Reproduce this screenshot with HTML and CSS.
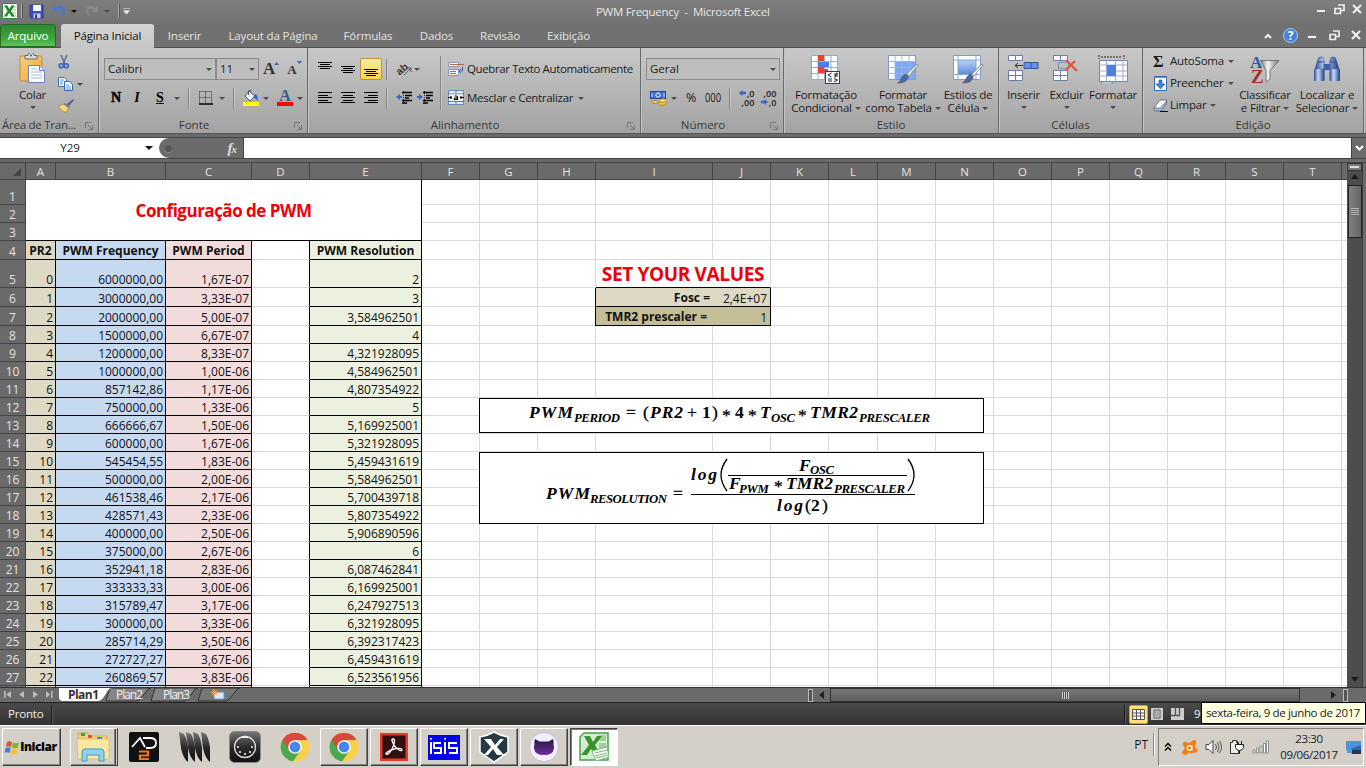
FILE: index.html
```html
<!DOCTYPE html>
<html lang="pt-BR">
<head>
<meta charset="utf-8">
<title>PWM Frequency - Microsoft Excel</title>
<link rel="stylesheet" href="styles.css">
</head>
<body>
<svg class="sprite" width="0" height="0" aria-hidden="true">
  <defs>
    <linearGradient id="gBlue" x1="0" y1="0" x2="0" y2="1"><stop offset="0" stop-color="#b9d0f5"/><stop offset="1" stop-color="#5f8fdc"/></linearGradient>
    <linearGradient id="gBin" x1="0" y1="0" x2="1" y2="0"><stop offset="0" stop-color="#2d4f94"/><stop offset=".4" stop-color="#c4d8fa"/><stop offset="1" stop-color="#1f3c7c"/></linearGradient>
    <linearGradient id="gFun" x1="0" y1="0" x2="1" y2="0"><stop offset="0" stop-color="#777"/><stop offset=".4" stop-color="#f4f4f4"/><stop offset="1" stop-color="#777"/></linearGradient>
    <linearGradient id="gPaste" x1="0" y1="0" x2="1" y2="1"><stop offset="0" stop-color="#f7cf7c"/><stop offset="1" stop-color="#e8a83c"/></linearGradient>
    <linearGradient id="gBlack" x1="0" y1="0" x2="0" y2="1"><stop offset="0" stop-color="#777"/><stop offset=".5" stop-color="#2a2a2a"/><stop offset="1" stop-color="#111"/></linearGradient>
    <linearGradient id="gPurple" x1="0" y1="0" x2="0" y2="1"><stop offset="0" stop-color="#2b1640"/><stop offset="1" stop-color="#6c2fa0"/></linearGradient>
    <symbol id="xl" viewBox="0 0 16 16"><rect x=".5" y=".5" width="15" height="15" rx="1" fill="#f4faf2" stroke="#2d8a3b"/><path d="M9 4h5M9 7h5M9 10h5M9 13h5" stroke="#9ccb98"/><path d="M2 2.500h3.300l2 3.600L9.600 2.500h3L8.900 8l4 5.500H9.600L7.200 9.800 5 13.500H1.800L5.600 8z" fill="#1f8a2c"/></symbol>
    <symbol id="save" viewBox="0 0 15 15"><path d="M1 1h13v13H2.500L1 12.500z" fill="#3d52b4" stroke="#2a3a90"/><path d="M4 1h8v6H4z" fill="#f2f5ff"/><path d="M4.500 9.500h7V14h-7z" fill="#c9cde8"/><path d="M6 10.500h2V14H6z" fill="#2a3a90"/></symbol>
    <symbol id="undo" viewBox="0 0 14 14"><path d="M1 1.500v6.500h6.500L5.300 5.800C8 3.300 11.500 5 10.500 8.500 10 10.500 9 11.500 7.500 13 12 11 13.500 8 13 5.500 12 1.500 7 .5 3.500 4z" fill="currentColor"/></symbol>
    <symbol id="scissors" viewBox="0 0 12 14"><path d="M3 0l4 9M9 0L5 9" stroke="#5b6b85" stroke-width="1.500"/><circle cx="3.200" cy="10.700" r="2" fill="none" stroke="#3463bb" stroke-width="1.600"/><circle cx="8.300" cy="10.700" r="2" fill="none" stroke="#3463bb" stroke-width="1.600"/></symbol>
    <symbol id="copy" viewBox="0 0 15 14"><path d="M.5.500h6l2 2v7h-8z" fill="#fff" stroke="#4c6ca8"/><path d="M6.500 4.500h5l3 3v6h-8z" fill="#fff" stroke="#3565b8"/><path d="M2 3h4M2 5h3M2 7h3M8 8h3M8 10h5M8 12h5" stroke="#4d8ae0"/></symbol>
    <symbol id="brush" viewBox="0 0 16 14"><path d="M15 0l1 1-5 6-2-2z" fill="#555f86"/><path d="M6 5l5 4-3 4.500C5 13 2 10.500.5 7z" fill="#f4d778" stroke="#a98024" stroke-width=".7"/><path d="M7 4l5 4-1.300 1.300-5-4z" fill="#7079a0"/></symbol>
    <symbol id="paste" viewBox="0 0 27 31"><rect x="1" y="3" width="22" height="25" rx="1.500" fill="url(#gPaste)" stroke="#c08b32"/><path d="M6 2.500h3a3 3 0 0 1 6 0h3V6H6z" fill="#ddd" stroke="#666"/><circle cx="12" cy="2.500" r="1" fill="#555"/><path d="M9.500 12.500h11l5 5v12h-16z" fill="#fff" stroke="#6982b2"/><path d="M20.500 12.500v5h5" fill="#dbe6fa" stroke="#6982b2"/><path d="M12 16h6M12 19h11M12 22h11M12 25h11" stroke="#9eb5d9"/></symbol>
    <symbol id="bord" viewBox="0 0 14 14"><path d="M.5.500h12v12M.5.500v12M6.500.500v12M.5 6.500h12" stroke="#333" stroke-dasharray="1 1" fill="none"/><path d="M0 13h14" stroke="#000" stroke-width="1.500"/></symbol>
    <symbol id="bucket" viewBox="0 0 16 16"><path d="M6 1l6 5-5 5-5-5z" fill="#eef3fc" stroke="#42587f"/><path d="M5.500 5V1.500a1.500 1.500 0 0 1 3 0" fill="none" stroke="#555"/><path d="M12 4c3 1 3 4 2.500 7C13 9 12 8 10 8z" fill="#3567b5"/><path d="M0 12h16v4H0z" fill="#ff0"/></symbol>
    <symbol id="al" viewBox="0 0 14 12"><path d="M0 .5h14M0 3.500h10M0 5.500h14M0 8.500h10M0 10.500h14" stroke="#000"/></symbol>
    <symbol id="ac" viewBox="0 0 14 12"><path d="M0 .5h14M2 3.500h10M0 5.500h14M2 8.500h10M0 10.500h14" stroke="#000"/></symbol>
    <symbol id="ar" viewBox="0 0 14 12"><path d="M0 .5h14M4 3.500h10M0 5.500h14M4 8.500h10M0 10.500h14" stroke="#000"/></symbol>
    <symbol id="vt" viewBox="0 0 14 7"><path d="M0 .5h14M2 2.500h10M0 4.500h14M2 6.500h10" stroke="#000"/></symbol>
    <symbol id="outd" viewBox="0 0 16 14"><path d="M0 6l4-3v2h2v2H4v2z" fill="#3a66c4"/><path d="M6 1.500h10M9 4.500h7M9 7h4M6 9.500h10M6 12h5" stroke="#000" stroke-width="1.400"/><path d="M7.500 0v14" stroke="#222" stroke-dasharray="1 1"/></symbol>
    <symbol id="ind" viewBox="0 0 16 14"><path d="M6 6L2 3v2H0v2h2v2z" fill="#3a66c4"/><path d="M6 1.500h10M9 4.500h7M9 7h4M6 9.500h10M6 12h5" stroke="#000" stroke-width="1.400"/><path d="M7.500 0v14" stroke="#222" stroke-dasharray="1 1"/></symbol>
    <symbol id="wrap" viewBox="0 0 16 16"><path d="M.5 1.500h10v4H.5zM.5 8.500h10v6H.5z" fill="#fff" stroke="#8496b4"/><path d="M2 3.500h14M2 10.500h6M2 12.500h6" stroke="#b5653d"/><path d="M14.500 6v4h-2M13 8l-2 2 2 2" fill="none" stroke="#3f5f98"/></symbol>
    <symbol id="merge" viewBox="0 0 16 16"><rect x=".5" y=".5" width="15" height="14" fill="#dbe8fb" stroke="#6d8cbe"/><path d="M0 4h16M0 11.500h16M8 0v4M8 11v4" stroke="#5b7fb8"/><path d="M1 4.500h14v6.500H1z" fill="#fff"/><path d="M0 7.500h4M12 7.500h4M3 6v3M13 6v3M6.500 6h2q1 0 1 1v3M9 8H7q-1 .3-.7 1.300Q7 10.300 9.500 9" fill="none" stroke="#000" stroke-width="1.200"/></symbol>
    <symbol id="money" viewBox="0 0 17 16"><rect x=".5" y="1.500" width="15" height="7" fill="#3e6fd0" stroke="#27499c"/><circle cx="8" cy="5" r="2.200" fill="none" stroke="#fff"/><path d="M2 3v4M14 3v4" stroke="#cfe0ff"/><ellipse cx="12.500" cy="13.500" rx="4" ry="1.900" fill="#f5c536" stroke="#a37314" stroke-width=".7"/><ellipse cx="13" cy="10.500" rx="3.400" ry="1.800" fill="#ffe27a" stroke="#a37314" stroke-width=".7"/><ellipse cx="5" cy="12" rx="3" ry="1.500" fill="#f8cf50" stroke="#a37314" stroke-width=".7"/></symbol>
    <symbol id="tri" viewBox="0 0 6 5"><path d="M0 2.500L3 0v1.500h3v2H3V5z" fill="#3465c6"/></symbol>
    <symbol id="cond" viewBox="0 0 30 29"><g fill="#fff" stroke="#7f9cc9" stroke-width=".8"><path d="M.5.500h26v24H.5zM.5 6.500h26M.5 12.500h26M.5 18.500h26M7 .5v24M13.500.500v24M20 .5v24"/></g><path d="M7 0h6v6H7zM7 12h6v6H7zM7 14h10v4H7z" fill="#e8442e"/><path d="M7 7h11v5H7z" fill="#4f7fe0"/><rect x="14.500" y="16.500" width="14" height="12" fill="#f7fbff" stroke="#333d60"/><path d="M20.500 18l-3.500 2 3.500 2M17 24h4M17 26h4M23 19h4M23 21h4M26 17.500l-2 5M23 23.500l3.500 1.500-3.500 2" fill="none" stroke="#222"/></symbol>
    <symbol id="fmt" viewBox="0 0 30 29"><path d="M.5.500h27v24H.5z" fill="#fff" stroke="#7f9cc9"/><path d="M7 6h20v18H7z" fill="#7ea9f0"/><path d="M.5 6.500h27M.5 12.500h27M.5 18.500h27M7 .5v24M14 .5v24M21 .5v24" stroke="#9db4dc" stroke-width=".9"/><path d="M29 9L19 19l2 2 9-11z" fill="#f2f2f2" stroke="#777" stroke-width=".7"/><path d="M17.500 19l3 3c-2 5-5 6-11 6 4-2 3-7 8-9z" fill="#3e6cb0" stroke="#7b4a20" stroke-width=".6"/></symbol>
    <symbol id="cel" viewBox="0 0 30 29"><path d="M.5.500h27v24H.5z" fill="#fff" stroke="#7f9cc9"/><path d="M5 5h18v14H5z" fill="url(#gBlue)"/><path d="M.5 5h27M.5 19.500h27M5 .5v24M23 .5v24" stroke="#8aa5d6"/><path d="M29 9L19 19l2 2 9-11z" fill="#f2f2f2" stroke="#777" stroke-width=".7"/><path d="M17.500 19l3 3c-2 5-5 6-11 6 4-2 3-7 8-9z" fill="#3e6cb0" stroke="#7b4a20" stroke-width=".6"/></symbol>
    <symbol id="ins" viewBox="0 0 31 27"><path d="M.5.500h14v5H.5zM7.500.500v5M.5 15.500h14v10H.5zM7.500 15.500v10M.5 20.500h14" fill="#fff" stroke="#6b7fa4"/><path d="M16 7.500h14v6H16zM23 7.500v6" fill="#6393ea" stroke="#36599c"/><path d="M7 10.500h8M10 8l-3 2.500 3 2.500" fill="none" stroke="#333"/></symbol>
    <symbol id="del" viewBox="0 0 27 27"><path d="M.5.500h14v5H.5zM7.500.500v5M.5 15.500h14v10H.5zM7.500 15.500v10M.5 20.500h14" fill="#fff" stroke="#6b7fa4"/><path d="M5.500 7.500h10v6h-10z" fill="none" stroke="#4565a5" stroke-dasharray="1 1"/><path d="M13 5l11 11M22 6L13 15" stroke="#e4502f" stroke-width="2"/></symbol>
    <symbol id="fcel" viewBox="0 0 31 29"><path d="M1 0v4M26 0v4M3 2h21" stroke="#222" stroke-dasharray="2 1"/><path d="M1.500 5.500h28v21h-28zM3 27h12l-1 2H4z" fill="#fff" stroke="#6f89b5"/><path d="M1.500 10h28M1.500 16h28M1.500 21h28M8.500 5.500v21M17.500 5.500v21M25 5.500v21" stroke="#99add0"/><path d="M9 10h9v11H9z" fill="#4d80de"/></symbol>
    <symbol id="fill" viewBox="0 0 13 15"><path d="M.5.500h12v14H.5z" fill="#fff" stroke="#3568b8"/><path d="M.5 1.500h12" stroke="#5f91e2"/><path d="M5 4h3v4h3l-4.500 5L2 8h3z" fill="#3e7fe4" stroke="#23529f" stroke-width=".6"/></symbol>
    <symbol id="erase" viewBox="0 0 15 13"><path d="M6 2.500Q7 1 8.500 1h4.500q1.500 0 .5 1.500L8 9.500H2Q.5 9.500 1.500 8z" fill="#fff" stroke="#557" stroke-width=".8"/><path d="M1 9h6.500l6-7v2.500L8 12H2q-1.500-1-1-3z" fill="#9dbce8" stroke="#557" stroke-width=".7"/><path d="M7 12.500h8" stroke="#000"/></symbol>
    <symbol id="sort" viewBox="0 0 31 29"><text x="0" y="13" font-family="Liberation Serif" font-weight="700" font-size="17" fill="#2d5aa8">A</text><text x="1" y="28" font-family="Liberation Serif" font-weight="700" font-size="19" fill="#a52f2b">Z</text><path d="M10.500 5.500H29L20 15.500V24l-4 3V15.500z" fill="url(#gFun)" stroke="#666" stroke-width=".8"/></symbol>
    <symbol id="bino" viewBox="0 0 28 26"><path d="M5 3.500Q5 1 8 1t3 2.500L12 13H2zM17 3.500Q17 1 20 1t3 2.500L26 13H16z" fill="url(#gBin)" stroke="#31508d" stroke-width=".6"/><path d="M10.500 8h7v6h-7z" fill="#3d62aa"/><rect x="1" y="13" width="10.500" height="12" rx="1" fill="url(#gBin)"/><rect x="16.500" y="13" width="10.500" height="12" rx="1" fill="url(#gBin)"/><path d="M4 6h7M17 6h7" stroke="#2d4c8f"/></symbol>
    <symbol id="min" viewBox="0 0 11 11"><path d="M.5 5.500h9v3h-9z" fill="#eee" stroke="#555" stroke-width=".6"/></symbol>
    <symbol id="rest" viewBox="0 0 11 11"><path d="M4 1h6v5.500H7.500M1 4.500h5.500V9.500H1z" fill="none" stroke="#eee" stroke-width="1.700"/></symbol>
    <symbol id="cls" viewBox="0 0 11 11"><path d="M1 1l8 8M9 1L1 9" stroke="#eee" stroke-width="2.200"/></symbol>
    <symbol id="launch" viewBox="0 0 8 8"><path d="M.5 6V.5H6" fill="none" stroke="#777"/><path d="M3 3l4 4M7.500 3.500v4h-4" fill="none" stroke="#777"/></symbol>
    <symbol id="folder" viewBox="0 0 34 30"><path d="M2 1h10l2 3h17v21H2z" fill="#f0d27a" stroke="#c79f3d" stroke-width=".7"/><path d="M5 1h4v3H5z" fill="#38a34b"/><path d="M12 3h4v3h-4z" fill="#d85c3a"/><path d="M21 5h5v2h-5z" fill="#4a7ad2"/><path d="M1 7h32v20H2z" fill="#f9e7a2" stroke="#d7b456" stroke-width=".7"/><path d="M6 29V20q0-3 3-3h16q3 0 3 3v9h-5v-6H11v6z" fill="#8fd2ed" stroke="#4798bd"/></symbol>
    <symbol id="chrome" viewBox="0 0 30 30"><circle cx="15" cy="15" r="14.500" fill="#fcd14a"/><path d="M2.400 8A14.500 14.500 0 0 0 13 29.400L20.500 18.500 15 15z" fill="#4aa950"/><path d="M2.400 8a14.500 14.500 0 0 1 25.200 0H15L9 18z" fill="#d64a3e"/><circle cx="15" cy="15" r="6.800" fill="#fff"/><circle cx="15" cy="15" r="5.400" fill="#4486ee"/></symbol>
  </defs>
</svg>

<div class="window">
  <div class="titlebar">
    <div class="quick">
      <svg class="i16"><use href="#xl"/></svg><b class="bar ml3"></b>
      <svg class="i15 ml6"><use href="#save"/></svg>
      <svg class="i14 ml8 undo"><use href="#undo"/></svg><i class="dd dark ml5"></i>
      <svg class="i14 ml8 redo"><use href="#undo"/></svg><i class="dd ml5"></i><b class="bar ml8"></b><i class="custom ml3"></i>
    </div>
    <div class="title">PWM Frequency&nbsp; -&nbsp; Microsoft Excel</div>
    <div class="controls"><svg class="i11"><use href="#min"/></svg><svg class="i11"><use href="#rest"/></svg><svg class="i11"><use href="#cls"/></svg></div>
  </div>

  <div class="tabs">
    <span class="file">Arquivo</span><span class="current">Página Inicial</span>
    <span class="t1">Inserir</span><span class="t2">Layout da Página</span><span class="t3">Fórmulas</span><span class="t4">Dados</span><span class="t5">Revisão</span><span class="t6">Exibição</span>
    <div class="doc">
      <svg class="i8" viewBox="0 0 8 8"><path d="M1 6l3-3 3 3" fill="none" stroke="#eee" stroke-width="2"/></svg>
      <b class="help">?</b><svg class="i11"><use href="#min"/></svg><svg class="i11"><use href="#rest"/></svg><svg class="i11"><use href="#cls"/></svg>
    </div>
  </div>

  <div class="ribbon">
    <section class="group g1">
      <div class="body">
        <div class="big colar"><svg width="27" height="31"><use href="#paste"/></svg><span>Colar</span><i class="dd"></i></div>
        <div class="clip">
          <svg width="12" height="14"><use href="#scissors"/></svg>
          <div class="line"><svg width="15" height="14"><use href="#copy"/></svg><i class="dd ml4"></i></div>
          <svg width="16" height="14"><use href="#brush"/></svg>
        </div>
      </div>
      <div class="foot"><span>Área de Tran...</span><svg class="launch"><use href="#launch"/></svg></div>
    </section>

    <section class="group g2">
      <div class="rows">
        <div class="line top">
          <div class="combo c1">Calibri<i class="dd"></i></div><div class="combo c2">11<i class="dd"></i></div>
          <b class="grow">A<svg width="5" height="3" viewBox="0 0 5 3"><path d="M0 3l2.500-3L5 3z" fill="#3565b8"/></svg></b>
          <b class="grow small">A<svg width="5" height="3" viewBox="0 0 5 3"><path d="M0 0l2.500 3L5 0z" fill="#3565b8"/></svg></b>
        </div>
        <div class="line bot">
          <b class="fs n">N</b><b class="fs it">I</b><b class="fs un">S</b><i class="dd"></i><b class="sep ml8"></b>
          <svg class="i14 ml9"><use href="#bord"/></svg><i class="dd ml6"></i><b class="sep ml8"></b>
          <svg class="i16 ml8"><use href="#bucket"/></svg><i class="dd ml4"></i>
          <b class="fontcolor">A</b><i class="dd ml4"></i>
        </div>
      </div>
      <div class="foot"><span>Fonte</span><svg class="launch"><use href="#launch"/></svg></div>
    </section>

    <section class="group g3">
      <div class="body">
        <div class="alicons">
          <div class="line top">
            <svg class="va vtop"><use href="#vt"/></svg><svg class="va ml9"><use href="#vt"/></svg><div class="sel"><svg class="va"><use href="#vt"/></svg></div>
            <b class="sep ml4"></b><svg class="orient" width="18" height="16" viewBox="0 0 18 16"><text x="0" y="11" transform="rotate(-40 7 8)" font-family="Liberation Sans" font-size="10.500" font-weight="700" fill="#333">ab</text><path d="M8 14L15 7M11 7h4v4" fill="none" stroke="#555"/></svg><i class="dd"></i>
          </div>
          <div class="line bot">
            <svg class="al"><use href="#al"/></svg><svg class="al ml9"><use href="#ac"/></svg><svg class="al ml9"><use href="#ar"/></svg>
            <b class="sep ml8"></b><svg class="in ml8"><use href="#outd"/></svg><svg class="in ml5"><use href="#ind"/></svg>
          </div>
        </div>
        <b class="tall"></b>
        <div class="altext">
          <div class="line top"><svg class="i16"><use href="#wrap"/></svg><span class="ml3 wraptext">Quebrar Texto Automaticamente</span></div>
          <div class="line bot"><svg class="i16"><use href="#merge"/></svg><span class="ml3 mergetext">Mesclar e Centralizar</span><i class="dd ml5"></i></div>
        </div>
      </div>
      <div class="foot"><span>Alinhamento</span><svg class="launch"><use href="#launch"/></svg></div>
    </section>

    <section class="group g4">
      <div class="rows">
        <div class="line top"><div class="combo c3">Geral<i class="dd"></i></div></div>
        <div class="line bot">
          <svg width="17" height="16" class="ml4"><use href="#money"/></svg><i class="dd ml4"></i><span class="pct">%</span><span class="mil">000</span><b class="sep ml8"></b>
          <div class="dec"><span><svg><use href="#tri"/></svg>,0</span><span>,00</span></div>
          <div class="dec d2"><span>,00</span><span><svg class="flip"><use href="#tri"/></svg>,0</span></div>
        </div>
      </div>
      <div class="foot"><span>Número</span><svg class="launch"><use href="#launch"/></svg></div>
    </section>

    <section class="group g5">
      <div class="body">
        <div class="big w84"><svg width="30" height="29"><use href="#cond"/></svg><span>Formatação</span><span>Condicional<i class="dd"></i></span></div>
        <div class="big w70"><svg width="30" height="29"><use href="#fmt"/></svg><span>Formatar</span><span>como Tabela<i class="dd"></i></span></div>
        <div class="big w60"><svg width="30" height="29"><use href="#cel"/></svg><span>Estilos de</span><span>Célula<i class="dd"></i></span></div>
      </div>
      <div class="foot"><span>Estilo</span></div>
    </section>

    <section class="group g6">
      <div class="body">
        <div class="big w42"><svg width="31" height="27"><use href="#ins"/></svg><span>Inserir</span><i class="dd"></i></div>
        <div class="big w42"><svg width="27" height="27"><use href="#del"/></svg><span>Excluir</span><i class="dd"></i></div>
        <div class="big w50"><svg width="31" height="29"><use href="#fcel"/></svg><span>Formatar</span><i class="dd"></i></div>
      </div>
      <div class="foot"><span>Células</span></div>
    </section>

    <section class="group g7">
      <div class="body">
        <div class="edit">
          <div class="line"><b class="sigma">Σ</b><span>AutoSoma</span><i class="dd"></i></div>
          <div class="line"><svg width="15" height="15"><use href="#fill"/></svg><span>Preencher</span><i class="dd"></i></div>
          <div class="line"><svg width="15" height="13"><use href="#erase"/></svg><span>Limpar</span><i class="dd"></i></div>
        </div>
        <div class="big w60"><svg width="31" height="29"><use href="#sort"/></svg><span>Classificar</span><span>e Filtrar<i class="dd"></i></span></div>
        <div class="big w66"><svg width="28" height="28"><use href="#bino"/></svg><span>Localizar e</span><span>Selecionar<i class="dd"></i></span></div>
      </div>
      <div class="foot"><span>Edição</span></div>
    </section>
  </div>

  <div class="formulabar">
    <div class="namebox"><span>Y29</span><i class="dd dark"></i></div>
    <div class="fxarea"><b class="knob"></b><span class="fx">f<small>x</small></span></div>
    <div class="input"></div>
    <div class="expand"><svg width="9" height="6" viewBox="0 0 9 6"><path d="M1 1l3.500 3.500L8 1" fill="none" stroke="#fff" stroke-width="2"/></svg></div>
  </div>

  <div class="work">
    <div class="grid" id="grid"></div>
    <div class="vscroll"><b class="split"></b><i class="up"></i><b class="thumb"><u></u></b><i class="down"></i></div>

    <div class="eq eq1">
      <svg width="503" height="33" viewBox="480 399 503 33">
        <text x="529" y="418" textLength="44">PWM</text><text class="sub" x="574" y="422" textLength="46">PERIOD</text>
        <text x="626" y="418" class="op">=</text><text class="op" x="643" y="418">(</text><text x="650" y="418" textLength="33">PR2</text>
        <text class="op" x="687" y="418">+</text><text class="up" x="702" y="418">1</text><text class="op" x="712" y="418">)</text><text class="op" x="722" y="421">*</text><text class="up" x="735" y="418">4</text><text class="op" x="748" y="421">*</text>
        <text x="760" y="418">T</text><text class="sub" x="771" y="422" textLength="24">OSC</text><text class="op" x="798" y="421">*</text>
        <text x="810" y="418" textLength="48">TMR2</text><text class="sub" x="859" y="422" textLength="71">PRESCALER</text>
      </svg>
    </div>
    <div class="eq eq2">
      <svg width="503" height="70" viewBox="480 453 503 70">
        <text x="546" y="499" textLength="44">PWM</text><text class="sub" x="590" y="503" textLength="77">RESOLUTION</text><text class="op" x="673" y="499">=</text>
        <path d="M691 494.500h224M728 475.500h179"/>
        <text x="691" y="480" textLength="26">log</text>
        <path class="paren" d="M727 459q-12 16 0 32M908 459q12 16 0 32"/>
        <text x="799" y="470.500">F</text><text class="sub" x="810" y="474" textLength="24">OSC</text>
        <text x="729" y="489">F</text><text class="sub" x="739" y="492.500" textLength="30">PWM</text><text class="op" x="774" y="492">*</text><text x="786" y="489" textLength="47">TMR2</text><text class="sub" x="834" y="492.500" textLength="71">PRESCALER</text>
        <text x="777" y="511" textLength="26">log</text><text class="op" x="805" y="511">(</text><text class="up" x="811" y="511">2</text><text class="op" x="822" y="511">)</text>
      </svg>
    </div>
  </div>

  <div class="sheetbar">
    <div class="nav"><svg width="52" height="9" viewBox="0 0 52 9"><path d="M0 1h1.500v7H0zM7 1v7L2 4.500zM20 1v7l-5-3.500zM29 1v7l5-3.500zM42 1v7l4-3.500zM47 1h1.500v7H47z" fill="#bdbdbd"/></svg></div>
    <svg class="sheets" width="184" height="14" viewBox="0 0 184 14">
      <path d="M51 0h41q-3 0-5 4l-5 6q-2 3-5 3H47z" fill="#858585" stroke="#333"/><path d="M96 0h43q-3 0-5 4l-5 6q-2 3-5 3H92z" fill="#858585" stroke="#333"/><path d="M143 0h38q-3 0-5 4l-5 6q-2 3-5 3H139z" fill="#777" stroke="#333"/>
      <path d="M0 0h53q-3 0-5 4l-4 6q-2 3-5 3H4q-4 0-4-4z" fill="#fff"/>
      <text x="9" y="11" class="on" textLength="31">Plan1</text><text x="57" y="11" textLength="27">Plan2</text><text x="104" y="11" textLength="27">Plan3</text>
      <path d="M155 4h10v7h-10z" fill="#dbe7fb" stroke="#6f8fc8"/><path d="M155 1v7M152 4.500h7M153 2l5 5M158 2l-5 5" stroke="#f0a63a"/>
    </svg>
    <div class="hscroll"><b class="hs"></b><i class="left"></i><b class="hthumb"><u></u></b><i class="right"></i><b class="hs"></b></div>
  </div>

  <div class="status">
    <span>Pronto</span><b></b>
    <div class="views"><b class="vs"></b>
      <div class="von"><svg width="13" height="11" viewBox="0 0 13 11"><path d="M.5.500h12v10H.5zM.5 4h12M.5 7h12M4.500.500v10M8.500.500v10" fill="#fff" stroke="#555"/></svg></div>
      <svg width="12" height="12" viewBox="0 0 12 12"><path d="M0 0h12v12H0z" fill="#ccc"/><path d="M3 2h6v8H3z" fill="#eee" stroke="#555"/><path d="M4 4h4M4 6h4M4 8h4" stroke="#666"/></svg>
      <svg width="13" height="12" viewBox="0 0 13 12"><path d="M0 0h13v12H0z" fill="#ccc"/><path d="M4.500 0v7M8.500 0v7M0 7.500h9" stroke="#555" stroke-width="1.300"/></svg>
      <span class="zoom">9</span>
    </div>
  </div>
  <div class="tooltip">sexta-feira, 9 de junho de 2017</div>

  <div class="taskbar">
    <div class="btn start"><svg width="16" height="15" viewBox="0 0 16 15"><path d="M3 2q2.500-1.500 5 0L7 7q-2.500-1.500-5 0z" fill="#e8502c"/><path d="M9 2.500q3 1.500 6 0L14 7.500q-3 1.500-6 0z" fill="#7cb82c"/><path d="M1.700 8q2.500-1.500 5 0l-1.200 5q-2.500-1.500-5 0z" fill="#3b82d8"/><path d="M7.700 8.500q3 1.500 6 0l-1.200 5q-3 1.500-6 0z" fill="#f8c12c"/></svg><b>Iniciar</b></div>
    <div class="btn exp"><svg width="34" height="30"><use href="#folder"/></svg></div>
    <div class="ico"><svg width="30" height="30" viewBox="0 0 30 30"><rect width="30" height="30" rx="2" fill="#111"/><path d="M3 15L11 6l5 9M14 6h7q6 0 6 5t-6 5h-4" fill="none" stroke="#fff" stroke-width="1.800"/><path d="M10 19.500h9v4h-8v3.500h9" fill="none" stroke="#f07818" stroke-width="2.200"/></svg></div>
    <div class="ico"><svg width="34" height="32" viewBox="0 0 34 32"><path id="blade" d="M1 1l5 2q3 5 4 14v14q-5-4-7-14z" fill="url(#gBlack)"/><use href="#blade" x="7"/><use href="#blade" x="14"/><use href="#blade" x="22"/></svg></div>
    <div class="ico"><svg width="32" height="32" viewBox="0 0 32 32"><rect x=".5" y=".5" width="31" height="31" rx="5" fill="url(#gBlack)" stroke="#888"/><circle cx="16" cy="16" r="10.500" fill="none" stroke="#ddd" stroke-width="1.300"/><g fill="#eee"><circle cx="9" cy="16" r="1.100"/><circle cx="23" cy="16" r="1.100"/><circle cx="11" cy="21" r="1.100"/><circle cx="21" cy="21" r="1.100"/><circle cx="16" cy="23" r="1.100"/><path d="M13 5h6v2h-6z"/></g></svg></div>
    <div class="ico"><svg width="30" height="30"><use href="#chrome"/></svg></div>
    <div class="btn app"><svg width="30" height="30"><use href="#chrome"/></svg></div>
    <div class="btn app"><svg width="28" height="28" viewBox="0 0 28 28"><path d="M0 0h28v28H0z" fill="#e6392a"/><path d="M2.500 2.500h23v23h-23z" fill="#321010"/><path d="M13 6c3 0 1 6-1 10s-5 6-6 5 4-4 8-5 8-1 8 1-6-1-8-5-3-6-1-6z" fill="none" stroke="#fff" stroke-width="1.300"/></svg></div>
    <div class="btn app"><svg width="32" height="25" viewBox="0 0 32 25"><path d="M0 0h32v25H0z" fill="#0000f4"/><path d="M3 7v12M3 3v1.500M13 8H6v5h7v5H6M17 7v12M17 3v1.500M29 8h-8v5h8v5h-8" fill="none" stroke="#fff" stroke-width="2"/></svg></div>
    <div class="btn app"><svg width="32" height="32" viewBox="0 0 32 32"><path d="M16 1q7 4 14 5v15l-14 10L2 21V6q7-1 14-5z" fill="#263942" stroke="#fff" stroke-width="1.500"/><path d="M6 8h7l4 6 5-6h4l-7 8 7 8h-7l-4-6-5 6H6l7-8z" fill="#fff"/></svg></div>
    <div class="btn app"><svg width="30" height="30" viewBox="0 0 30 30"><circle cx="15" cy="15" r="14.500" fill="#f1effb" stroke="#c5bedd"/><path d="M6 7l4.500 2.500h9L24 7q1 3 .5 5.500.8 2 .3 4.500-1 6-9.800 6t-9.800-6q-.5-2.500.3-4.500Q5 10 6 7z" fill="url(#gPurple)"/></svg></div>
    <div class="btn app active"><svg width="31" height="30" viewBox="0 0 31 30"><path d="M5 1h24v27H1V5z" fill="#d5ecd2" stroke="#47a04b" stroke-width="1.500"/><path d="M20 3h7v6h-7zM20 11h7v5h-7z" fill="#9fcf9d"/><path d="M5 4h6l3 6 4-6h5l-7 9 6 10h-6l-4-6-4 6H2l8-10z" fill="#38942c"/><path d="M13 19l15-4 2 10-13 4z" fill="#fff" stroke="#81b782"/><path d="M16 21l12-3M16 24l12-3M17 26l12-3" stroke="#77b777"/></svg></div>
    <span class="lang">PT</span><b class="tsep"></b>
    <div class="tray">
      <svg width="8" height="10" viewBox="0 0 8 10"><path d="M1 4.500L4 1.500l3 3M1 8.500l3-3 3 3" fill="none" stroke="#000" stroke-width="1.400"/></svg>
      <svg class="avast" width="17" height="17" viewBox="0 0 17 17"><path d="M3 3q2-1 4 1 3-.5 4-2 3-2 4 0 1 2-1 3.500v3q3 1 2.500 3.500-1 2.500-4 1.500-2 2-4.500 0Q5 17 2.500 15.500 0 14 2 11.500q2-1 1.500-3Q.5 5 3 3z" fill="#f57c13"/><circle cx="8.500" cy="9" r="2.300" fill="none" stroke="#fff" stroke-width="1.300"/><path d="M11 6.500v5" stroke="#fff"/></svg>
      <svg class="speaker" width="17" height="16" viewBox="0 0 17 16"><path d="M1 5.500h3l4-4v13l-4-4H1z" fill="#fff" stroke="#444"/><path d="M10.500 5q2 3 0 6M12.500 3q3 5 0 10M14.500 2q4 6 0 12" fill="none" stroke="#555"/></svg>
      <svg class="plug" width="16" height="16" viewBox="0 0 16 16"><path d="M1.500 3.500h2v-2h4v2h2v11h-8z" fill="#eee" stroke="#333"/><path d="M6.500 5.500h8v3q-1 3-4 3t-4-3zM8.500 2v3.500M12.500 2v3.500M10.500 11.500V15" fill="#fff" stroke="#222"/></svg>
      <svg class="signal" width="17" height="14" viewBox="0 0 17 14"><path d="M1 10h2v3H1zM4.500 8h2v5h-2zM8 6h2v7H8zM11.500 3.500h2V13h-2zM14.500 1h2v12h-2z" fill="#fff" stroke="#777" stroke-width=".8"/></svg>
      <div class="clock"><span>23:30</span><span>09/06/2017</span></div>
      <svg class="mon" width="15" height="13" viewBox="0 0 15 13"><path d="M0 0h15v9H0z" fill="#2566b5"/><path d="M0 0h15v4Q7 7 0 9z" fill="#4d92dd"/><path d="M0 9h15v4H6l-2-3z" fill="#29364b"/><path d="M1 8h5v4H1z" fill="#4f9ee5"/></svg>
    </div>
  </div>
</div>
<script src="grid.js"></script>
</body>
</html>
```

FILE: grid.js
```js
const columns = 'ABCDEFGHIJKLMNOPQRSTU'.split('');
const periods = ['1,67E-07','3,33E-07','5,00E-07','6,67E-07','8,33E-07','1,00E-06','1,17E-06','1,33E-06','1,50E-06','1,67E-06','1,83E-06','2,00E-06','2,17E-06','2,33E-06','2,50E-06','2,67E-06','2,83E-06','3,00E-06','3,17E-06','3,33E-06','3,50E-06','3,67E-06','3,83E-06'];
const resolutions = ['2','3','3,584962501','4','4,321928095','4,584962501','4,807354922','5','5,169925001','5,321928095','5,459431619','5,584962501','5,700439718','5,807354922','5,906890596','6','6,087462841','6,169925001','6,247927513','6,321928095','6,392317423','6,459431619','6,523561956'];
const grid = document.getElementById('grid');

function cell(className, text, row, col, rowSpan, colSpan) {
  const el = document.createElement('div');
  el.className = className;
  el.textContent = text || '';
  el.style.gridArea = `${row} / ${col} / span ${rowSpan || 1} / span ${colSpan || 1}`;
  grid.appendChild(el);
}

cell('corner', '', 1, 1);
columns.forEach((name, i) => cell('colhead', name === 'U' ? '' : name, 1, i + 2));
for (let r = 1; r <= 28; r++) cell('rowhead', r < 28 ? String(r) : '', r + 1, 1);

cell('cell heading', 'Configuração de PWM', 2, 2, 3, 5);
for (let r = 4; r <= 28; r++) {
  const n = r - 5;
  const isHead = r === 4;
  const hasData = n >= 0 && r < 28;
  const kind = isHead ? 'th' : 'num';
  cell(`cell ${kind} tan`, isHead ? 'PR2' : hasData ? String(n) : '', r + 1, 2);
  cell(`cell ${kind} blue`, isHead ? 'PWM Frequency' : hasData ? (6000000 / (n + 1)).toFixed(2).replace('.', ',') : '', r + 1, 3);
  cell(`cell ${kind} pink`, isHead ? 'PWM Period' : hasData ? periods[n] : '', r + 1, 4);
  cell('cell gap', '', r + 1, 5);
  cell(`cell ${kind} green`, isHead ? 'PWM Resolution' : hasData ? resolutions[n] : '', r + 1, 6);
}
for (let r = 1; r <= 28; r++) {
  for (let c = 6; c <= 21; c++) {
    const inValues = c === 9 || c === 10;
    if (inValues && r >= 5 && r <= 7) continue;
    cell('cell', '', r + 1, c + 1);
  }
}
cell('cell set', 'SET YOUR VALUES', 6, 10, 1, 2);
cell('cell label light', 'Fosc =', 7, 10);
cell('cell num value light', '2,4E+07', 7, 11);
cell('cell label olive', 'TMR2 prescaler =', 8, 10);
cell('cell num value olive', '1', 8, 11);
```

FILE: styles.css
```css
* { box-sizing: border-box; }
body { margin: 0; background: #6b6b6b; font: 11.5px/14px "Open Sans", "Noto Sans", sans-serif; color: #1c1c1c; overflow: hidden; }
.sprite { position: absolute; }
.window { position: relative; width: 1366px; height: 768px; display: flex; flex-direction: column; overflow: hidden; }
svg { display: block; flex: none; }
b, i, span { flex: none; }
.line { display: flex; align-items: center; white-space: nowrap; }
.i16 { width: 16px; height: 16px; } .i15 { width: 15px; height: 15px; } .i14 { width: 14px; height: 14px; } .i11 { width: 11px; height: 11px; } .i8 { width: 8px; height: 8px; }
.ml3 { margin-left: 3px; } .ml4 { margin-left: 4px; } .ml5 { margin-left: 5px; } .ml6 { margin-left: 6px; } .ml8 { margin-left: 8px; } .ml9 { margin-left: 9px; }
.dd { display: inline-block; width: 0; height: 0; border: solid transparent; border-width: 3px 3px 0; border-top-color: #4c4c4c; }
.dd.dark { border-top-color: #111; }

/* Title bar and tabs */
.titlebar { height: 24px; display: flex; background: linear-gradient(#7e7e7e, #727272); }
.quick { width: 596px; height: 22px; display: flex; align-items: center; padding-left: 2px; }
.bar { width: 2px; height: 14px; border-left: 1px solid #aaa; border-right: 1px solid #555; }
.undo { color: #4678cf; } .redo { color: #888; transform: scaleX(-1); }
.custom { width: 7px; height: 7px; background: #eee; clip-path: polygon(0 0, 100% 0, 100% 1px, 0 1px, 0 3px, 100% 3px, 50% 100%, 0 3px); }
.title { width: 680px; padding-top: 5px; color: #e6e6e6; letter-spacing: -.3px; }
.controls { margin-left: auto; display: flex; gap: 7px; padding: 4px 3px 0 0; }
.tabs { height: 24px; display: flex; align-items: stretch; background: #707070; color: #e2e2e2; line-height: 23px; text-align: center; border-bottom: 1px solid #505050; white-space: nowrap; letter-spacing: -.15px; }
.file { width: 56px; border: 1px solid #236b23; border-radius: 3px 3px 0 0; background: linear-gradient(#2f8a31, #3da23e 60%, #5cc65b); color: #fff; line-height: 22px; }
.current { width: 93px; margin-left: 5px; margin-bottom: -1px; background: linear-gradient(#d4d4d4, #c6c6c6); border-radius: 3px 3px 0 0; color: #111; }
.t1 { width: 61px; } .t2 { width: 116px; } .t3 { width: 74px; } .t4 { width: 63px; } .t5 { width: 64px; } .t6 { width: 73px; }
.doc { margin-left: auto; display: flex; align-items: center; gap: 11px; padding-right: 4px; }
.help { width: 15px; height: 15px; border-radius: 50%; background: #4484df; border: 1px solid #a6c9f6; color: #fff; font-size: 12px; line-height: 13px; margin-right: -2px; }

/* Ribbon */
.ribbon { height: 86px; display: flex; background: linear-gradient(#c8c8c8, #b7b7b7 45%, #a3a3a3); border-bottom: 1px solid #555; }
.group { display: flex; flex-direction: column; border-right: 1px solid #6a6a6a; box-shadow: 1px 0 0 #c4c4c4; }
.g1 { width: 99px; } .g2 { width: 209px; } .g3 { width: 333px; } .g4 { width: 143px; } .g5 { width: 215px; } .g6 { width: 144px; } .g7 { width: 221px; }
.body { height: 70px; display: flex; }
.rows { height: 70px; }
.foot { position: relative; height: 15px; text-align: center; color: #3a3a3a; white-space: nowrap; }
.g1 .foot { padding-right: 20px; letter-spacing: -.25px; }
.g2 .foot, .g3 .foot, .g4 .foot { padding-right: 18px; }
.launch { position: absolute; right: 5px; top: 4px; width: 8px; height: 8px; }
.top { height: 22px; margin-top: 10px; }
.bot { height: 22px; margin-top: 7px; }
.big { display: flex; flex-direction: column; align-items: center; line-height: 13px; white-space: nowrap; padding-top: 7px; letter-spacing: -.2px; }
.big > svg { margin-bottom: auto; }
.big > i.dd { margin: 5px 0 9px; }
.big span .dd { margin: 0 0 2px 3px; }
.big span:last-child { padding-bottom: 4px; }
.colar { width: 41px; margin-left: 12px; padding-top: 5px; }
.clip { margin-left: 5px; display: flex; flex-direction: column; padding-top: 7px; gap: 8px; }
.combo { height: 22px; border: 1px solid #8b8b8b; background: #bebebe; display: flex; align-items: center; justify-content: space-between; padding: 0 3px; }
.c1 { width: 112px; margin-left: 5px; } .c2 { width: 43px; } .c3 { width: 134px; margin-left: 5px; }
.grow { font: 700 17px/22px "Liberation Serif", serif; display: flex; margin-left: 4px; color: #333; }
.grow svg { margin: 4px 0 0 -1px; }
.small { font-size: 13px; line-height: 25px; margin-left: 8px; } .small svg { margin-left: 0; }
.g2 .bot { padding-left: 7px; }
.fs { width: 22px; text-align: center; font: 700 14px/22px "Liberation Serif", serif; color: #000; }
.it { font-style: italic; } .un { text-decoration: underline; width: 24px; margin-right: 2px; } .n { width: 20px; -webkit-text-stroke: .5px #000; }
.sep { width: 2px; height: 21px; border-left: 1px solid #858585; border-right: 1px solid #c8c8c8; }
.fontcolor { width: 16px; height: 16px; margin-left: 8px; border-bottom: 4px solid #f00; font: 700 16px/12px "Liberation Serif", serif; text-align: center; color: #38598e; }
.alicons { width: 130px; padding-left: 10px; }
.va { width: 14px; height: 7px; } .vtop { margin-bottom: 7px; }
.sel { width: 22px; height: 22px; margin-left: 5px; border: 1px solid #c0903a; border-radius: 2px; background: linear-gradient(#fde9a0, #ffd556); padding: 10px 3px 0; }
.orient { margin-left: 8px; } .al { width: 14px; height: 12px; } .in { width: 16px; height: 14px; }
.tall { width: 2px; height: 54px; margin-top: 8px; margin-left: 2px; border-left: 1px solid #858585; border-right: 1px solid #c8c8c8; }
.altext { margin-left: 6px; }
.wraptext { letter-spacing: -.39px; } .mergetext { letter-spacing: -.3px; }
.g4 .bot { padding-left: 5px; }
.pct { margin-left: 9px; font-size: 12.5px; } .mil { width: 22px; margin-left: 9px; font-size: 12px; transform: scaleX(.78); transform-origin: left; margin-right: -6px; }
.dec { width: 16px; margin-left: 7px; font: 600 9px/9px "Open Sans", sans-serif; display: flex; flex-direction: column; color: #222; }
.dec span { display: flex; justify-content: flex-end; } .dec svg { width: 7px; height: 6px; margin: 1px 1px 0 0; } .flip { transform: scaleX(-1); }
.d2 { margin-left: 6px; }
.w84 { width: 84px; } .w70 { width: 70px; } .w60 { width: 60px; } .w42 { width: 43px; } .w50 { width: 50px; } .w66 { width: 64px; }
.g6 .body { padding-left: 3px; }
.edit { width: 92px; padding: 2px 0 0 10px; }
.edit .line { height: 22px; } .edit svg, .sigma { width: 15px; } .edit span { margin-left: 2px; letter-spacing: -.2px; } .edit .dd { margin-left: 4px; }
.sigma { font: 700 16px/15px "Liberation Serif", serif; }

/* Formula bar */
.formulabar { height: 22px; margin-top: 3px; display: flex; background: #fff; border-top: 1px solid #444; border-bottom: 1px solid #444; }
.namebox { width: 159px; display: flex; align-items: center; } .namebox span { width: 140px; text-align: center; } .namebox .dd { margin-left: 5px; border-width: 4px 4px 0; }
.fxarea { width: 85px; background: #6b6b6b; border-radius: 10px 0 0 10px; border-right: 1px solid #444; display: flex; align-items: center; justify-content: space-between; padding: 0 7px 0 6px; }
.knob { width: 7px; height: 7px; border-radius: 50%; background: #555; box-shadow: 0 1px #888; }
.fx { font: italic 700 15px/16px "Liberation Serif", serif; color: #ddd; letter-spacing: -1px; } .fx small { font-size: 11px; }
.input { flex: 1; } .expand { width: 15px; background: #6b6b6b; padding: 7px 3px; border-left: 1px solid #444; }

/* Worksheet */
.work { position: relative; height: 526px; flex: none; margin-top: 3px; display: flex; border-top: 1px solid #444; background: #6b6b6b; overflow: hidden; }
.grid { width: 1347px; flex: none; overflow: hidden; display: grid; grid-template-columns: 26px 30px 110px 86px 58px 112px 58px 58px 58px 117px 58px 58px 49px repeat(8, 58px) 6px; grid-template-rows: 17px 25px 18px 18px 19px 28px 19px 19px repeat(20, 18px) 2px; }
.colhead, .rowhead, .corner { background: #6a6a6a; color: #e2e2e2; text-align: center; border-right: 1px solid #444; border-bottom: 1px solid #444; overflow: hidden; }
.colhead { line-height: 17px; }
.rowhead { display: flex; align-items: flex-end; justify-content: center; line-height: 14px; font-size: 12px; }
.corner::after { content: ""; display: block; margin: 5px 0 0 13px; border: solid transparent; border-width: 0 0 8px 8px; border-bottom-color: #444; width: 0; }
.cell { background: #fff; border-right: 1px solid #d9dadb; border-bottom: 1px solid #d9dadb; overflow: hidden; white-space: nowrap; color: #111; }
.heading { border-color: #000; display: flex; align-items: center; justify-content: center; padding-top: 1px; color: #ee0008; font: 700 17px/20px "Open Sans", sans-serif; letter-spacing: -.5px; }
.tan, .blue, .pink, .green { border-color: #000; }
.tan { background: #ddd9c4; } .blue { background: #c5d9f1; } .pink { background: #f2dcdb; } .green { background: #ebf1de; }
.gap { border-right-color: #000; }
.num { display: flex; align-items: flex-end; justify-content: flex-end; font-size: 12px; line-height: 14px; padding-right: 2px; }
.th { text-align: center; font: 700 12px/19px "Open Sans", sans-serif; }
.set { color: #ee0008; text-align: center; border-bottom-color: #000; font: 700 19px/29px "Open Sans", sans-serif; letter-spacing: -.35px; }
.light { background: #ddd9c4; } .olive { background: #c4bd97; }
.label { border-color: #000; border-right: 0; border-left: 1px solid #000; margin-left: -1px; text-align: right; padding-right: 3px; font: 700 12px/19px "Open Sans", sans-serif; }
.value { border-color: #000; padding-right: 3px; }
.olive.label { padding-right: 6px; }
.eq { position: absolute; background: #fff; border: 1px solid #000; width: 505px; left: 479px; }
.eq1 { top: 235px; height: 35px; } .eq2 { top: 289px; height: 72px; }
.eq text { font: italic 700 17.5px "Liberation Serif", serif; fill: #000; } .eq .sub { font-size: 12.8px; } .eq text.up, .eq text.op { font-style: normal; } .eq text.op { font-weight: 400; stroke: #000; stroke-width: .3px; }
.eq path { stroke: #000; fill: none; } .eq .paren { stroke-width: 1.300; }
.vscroll { width: 16px; display: flex; flex-direction: column; align-items: center; background: #4d4d4d; border-right: 1px solid #3a3a3a; }
.split { width: 13px; height: 6px; border: 2px solid #777; outline: 1px solid #333; background: #ddd; margin-top: 1px; } .up { border: solid transparent; border-width: 0 4px 5px; border-bottom-color: #1c1c1c; margin-top: 4px; }
.thumb { width: 14px; height: 53px; margin-top: 6px; background: linear-gradient(90deg, #808080, #666); border: 1px solid #222; display: flex; align-items: center; justify-content: center; } .thumb u { width: 8px; height: 8px; background: repeating-linear-gradient(#b5b5b5 0 1px, #6a6a6a 1px 2px); } .down { border: solid transparent; border-width: 5px 4px 0; border-top-color: #1c1c1c; margin-top: auto; margin-bottom: 6px; }

/* Sheet tabs and status */
.sheetbar { height: 15px; margin-top: -1px; z-index: 1; flex: none; display: flex; background: #6b6b6b; border-top: 1px solid #333; }
.nav { width: 59px; padding: 2px 4px; } .sheets { font: 12px "Open Sans", sans-serif; } .sheets text { fill: #eee; } .sheets .on { fill: #333; font-weight: 700; }
.hscroll { margin-left: auto; width: 540px; display: flex; align-items: center; margin-right: 18px; }
.hs { width: 5px; height: 13px; border: 1px solid #bbb; background: #555; } .left { margin-left: 6px; border: solid transparent; border-width: 4px 5px 4px 0; border-right-color: #222; }
.hthumb { margin-left: 6px; width: 470px; height: 14px; background: linear-gradient(#767676, #5e5e5e); border: 1px solid #333; display: flex; align-items: center; justify-content: center; } .hthumb u { width: 7px; height: 7px; background: repeating-linear-gradient(90deg, #ccc 0 1px, #555 1px 2px); }
.right { margin-left: auto; margin-right: 7px; border: solid transparent; border-width: 4px 0 4px 5px; border-left-color: #222; }
.status { height: 23px; flex: none; display: flex; align-items: center; background: linear-gradient(#4a4a4a, #333); border-top: 1px solid #222; color: #eee; padding-left: 8px; letter-spacing: -.2px; }
.status > b, .vs { width: 2px; height: 19px; border-left: 1px solid #1d1d1d; border-right: 1px solid #555; } .status > b { margin-left: 8px; }
.views { margin-left: auto; width: 242px; display: flex; align-items: center; gap: 8px; } .von { width: 19px; height: 19px; border: 1px solid #d1a030; border-radius: 2px; background: #ffe17a; padding: 3px 2px; margin-left: -5px; margin-right: -5px; }
.zoom { margin-left: 2px; }
.tooltip { position: absolute; left: 1201px; top: 702px; width: 165px; height: 22px; background: #ffffe1; border: 1px solid #000; z-index: 3; font: 11.5px/20px "Open Sans", sans-serif; letter-spacing: -.36px; padding-left: 4px; white-space: nowrap; color: #222; }

/* Taskbar */
.taskbar { height: 43px; flex: none; display: flex; align-items: flex-start; background: #d4d0c8; border-top: 1px solid #fff; padding-top: 2px; }
.btn { height: 38px; display: flex; align-items: center; justify-content: center; border: 1px solid; border-color: #fff #404040 #404040 #fff; box-shadow: inset -1px -1px #808080; }
.start { width: 59px; margin-left: 2px; font: 700 12px/14px "Open Sans", sans-serif; color: #000; } .start b { letter-spacing: -.45px; margin-right: 2px; }
.exp { width: 48px; margin-left: 9px; border-right-width: 3px; border-right-style: double; }
.ico { width: 50px; height: 38px; display: flex; align-items: center; justify-content: center; }
.app { width: 48px; margin-right: 2px; }
.active { background: #fff; border-color: #404040 #fff #fff #404040; box-shadow: inset 1px 1px #808080; }
.exp + .ico { margin-left: 1px; } .exp + .ico + .ico { margin-left: 1px; }
.lang { margin-left: auto; padding-top: 10px; font-size: 12px; } .tsep { height: 23px; width: 2px; border-left: 1px solid #888; border-right: 1px solid #fff; margin: 5px 3px 0 5px; }
.tray { width: 206px; height: 38px; margin-right: 2px; border: 1px solid; border-color: #808080 #fff #fff #808080; display: flex; align-items: center; padding-left: 5px; }
.avast { margin-left: 9px; } .speaker { margin-left: 7px; } .plug { margin-left: 7px; } .signal { margin-left: 7px; } .clock { width: 74px; margin-left: 3px; display: flex; flex-direction: column; text-align: center; line-height: 16px; color: #222; letter-spacing: -.35px; } .mon { margin-left: 0; }
```
